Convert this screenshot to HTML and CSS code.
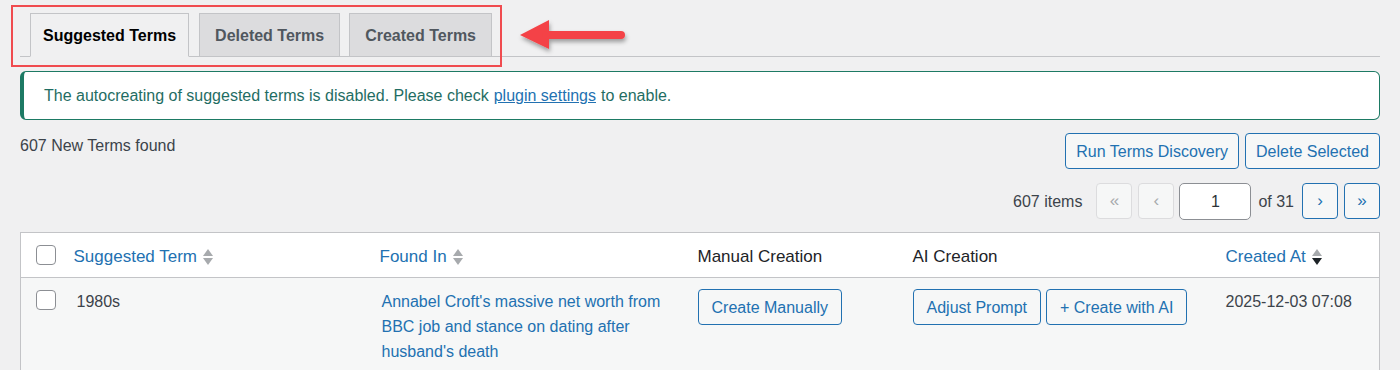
FILE: index.html
```html
<!doctype html>
<html lang="en">
  <head>
    <meta charset="UTF-8" />
    <title>Suggested Terms</title>
    <link rel="stylesheet" href="styles.css">
  </head>
  <body>
    <div class="wrap">
      <nav class="nav-tabs">
        <a class="tab active">Suggested Terms</a>
        <a class="tab">Deleted Terms</a>
        <a class="tab">Created Terms</a>
      </nav>

      <div class="notice">
        The autocreating of suggested terms is disabled. Please check <a href="#">plugin settings</a> to enable.
      </div>

      <div class="toolbar">
        <p class="found">607 New Terms found</p>
        <div class="actions">
          <button class="btn">Run Terms Discovery</button>
          <button class="btn">Delete Selected</button>
        </div>
      </div>

      <div class="pagination">
        <span class="count">607 items</span>
        <span class="page-btn disabled">&laquo;</span>
        <span class="page-btn disabled">&lsaquo;</span>
        <input class="page-input" type="text" value="1">
        <span class="of">of 31</span>
        <span class="page-btn">&rsaquo;</span>
        <span class="page-btn">&raquo;</span>
      </div>

      <table class="terms">
        <colgroup>
          <col class="c-cb"><col class="c-term"><col class="c-found"><col class="c-manual"><col class="c-ai"><col>
        </colgroup>
        <thead>
          <tr>
            <th class="cb"><span class="check"></span></th>
            <th><a class="sortable">Suggested Term <span class="sort"><i class="up"></i><i class="down"></i></span></a></th>
            <th><a class="sortable">Found In <span class="sort"><i class="up"></i><i class="down"></i></span></a></th>
            <th class="plain">Manual Creation</th>
            <th class="plain">AI Creation</th>
            <th><a class="sortable">Created At <span class="sort"><i class="up"></i><i class="down on"></i></span></a></th>
          </tr>
        </thead>
        <tbody>
          <tr>
            <td class="cb"><span class="check"></span></td>
            <td class="term">1980s</td>
            <td><a class="post-link" href="#">Annabel Croft's massive net worth from BBC job and stance on dating after husband's death</a></td>
            <td><button class="btn small">Create Manually</button></td>
            <td class="ai-btns"><button class="btn small">Adjust Prompt</button><button class="btn small">+ Create with AI</button></td>
            <td class="date">2025-12-03 07:08</td>
          </tr>
        </tbody>
      </table>

      <div class="highlight"></div>
      <svg class="arrow" width="120" height="40" viewBox="0 0 120 40">
        <defs>
          <filter id="shadow" x="-20%" y="-40%" width="140%" height="180%">
            <feDropShadow dx="1" dy="3" stdDeviation="2" flood-color="#000" flood-opacity="0.35"/>
          </filter>
        </defs>
        <g filter="url(#shadow)">
          <polygon points="4,19 33,4 33,33" fill="#f44346"/>
          <line x1="30" y1="19" x2="105" y2="19" stroke="#f44346" stroke-width="8" stroke-linecap="round"/>
        </g>
      </svg>
    </div>
  </body>
</html>
```

FILE: styles.css
```css
body {
  margin: 0;
  background: #f0f0f1;
  font-family: "Liberation Sans", Arial, sans-serif;
  color: #3c434a;
  font-size: 16px;
}
.wrap {
  position: relative;
  padding: 0 20px;
}
.nav-tabs {
  display: flex;
  gap: 9px;
  padding: 13px 0 0 10px;
  border-bottom: 1px solid #c3c4c7;
  height: 43px;
}
.tab {
  display: flex;
  align-items: center;
  padding: 1px 15px 0;
  height: 41px;
  margin-bottom: -1px;
  border: 1px solid #c3c4c7;
  background: #dcdcde;
  color: #50575e;
  font-size: 16px;
  font-weight: 600;
}
.tab.active {
  padding: 1px 12px 0;
  margin-right: 1px;
  background: #f0f0f1;
  color: #000;
  border-bottom-color: #f0f0f1;
}
.notice {
  margin-top: 14px;
  display: flex;
  align-items: center;
  padding: 1px 0 0 20px;
  box-sizing: border-box;
  height: 49px;
  background: #fff;
  border: 1px solid #1d7a64;
  border-left-width: 4px;
  border-radius: 6px;
  color: #1f6d63;
  font-size: 16px;
}
.notice a {
  color: #2271b1;
  margin: 0 5px;
}
.toolbar {
  display: flex;
  justify-content: space-between;
  align-items: flex-start;
  margin-top: 13px;
}
.found {
  margin: 4px 0 0;
}
.actions {
  display: flex;
  gap: 6px;
}
.btn {
  font-family: inherit;
  font-size: 16px;
  color: #2271b1;
  background: #f6f7f7;
  border: 1px solid #2271b1;
  border-radius: 4px;
  height: 36px;
  padding: 2px 10px 0;
  cursor: pointer;
}
.pagination {
  display: flex;
  justify-content: flex-end;
  align-items: center;
  gap: 5px;
  margin-top: 14px;
  height: 36px;
}
.count {
  margin: 2px 9px 0 0;
}
.of {
  margin: 2px 3px 0 2px;
}
.page-btn {
  display: flex;
  align-items: center;
  justify-content: center;
  box-sizing: border-box;
  width: 36px;
  height: 36px;
  border: 1px solid #2271b1;
  border-radius: 4px;
  background: #f6f7f7;
  color: #2271b1;
  font-size: 17px;
}
.page-btn + .page-btn {
  margin-left: 1px;
}
.page-btn.disabled {
  border-color: #dcdcde;
  color: #a7aaad;
}
.page-input {
  width: 72px;
  height: 37px;
  box-sizing: border-box;
  padding-top: 2px;
  border: 1px solid #8c8f94;
  border-radius: 5px;
  text-align: center;
  font-family: inherit;
  font-size: 16px;
  color: #2c3338;
}
.terms {
  width: 100%;
  margin-top: 13px;
  border-collapse: collapse;
  table-layout: fixed;
  border: 1px solid #c3c4c7;
}
.c-cb { width: 43px; }
.c-term { width: 306px; }
.c-found { width: 318px; }
.c-manual { width: 215px; }
.c-ai { width: 313px; }
.terms th {
  background: #fff;
  height: 41px;
  text-align: left;
  font-weight: 400;
  font-size: 17px;
  padding: 3px 10px 0;
  border-bottom: 1px solid #c3c4c7;
}
.terms th.cb {
  padding-top: 0;
}
.terms th.plain {
  color: #1d2327;
}
.sortable {
  color: #2271b1;
  display: inline-flex;
  align-items: center;
  gap: 6px;
}
.sort {
  display: inline-flex;
  flex-direction: column;
  gap: 2px;
}
.sort i {
  width: 0;
  height: 0;
  border-left: 5px solid transparent;
  border-right: 5px solid transparent;
}
.sort .up {
  border-bottom: 7px solid #a7aaad;
}
.sort .down {
  border-top: 7px solid #a7aaad;
}
.sort .down.on {
  border-top-color: #1d2327;
}
.terms td {
  background: #f6f7f7;
  vertical-align: top;
  padding: 11px 10px 8px;
  line-height: 25px;
}
.terms .cb {
  padding-left: 15px;
  padding-right: 0;
}
.terms td.cb {
  padding-top: 12px;
}
.check {
  display: block;
  width: 18px;
  height: 18px;
  border: 1px solid #8c8f94;
  border-radius: 4px;
  background: #fff;
}
.terms td.term {
  padding-left: 13px;
}
.post-link {
  color: #2271b1;
  text-decoration: none;
  display: block;
  padding-left: 2px;
}
.btn.small {
  padding: 2px 13px 0;
}
.ai-btns {
  white-space: nowrap;
}
.ai-btns .btn + .btn {
  margin-left: 5px;
}
.date {
  padding-left: 12px;
}
.highlight {
  position: absolute;
  left: 11px;
  top: 5px;
  width: 487px;
  height: 58px;
  border: 2px solid #f04b4f;
}
.arrow {
  position: absolute;
  left: 516px;
  top: 16px;
}
```
